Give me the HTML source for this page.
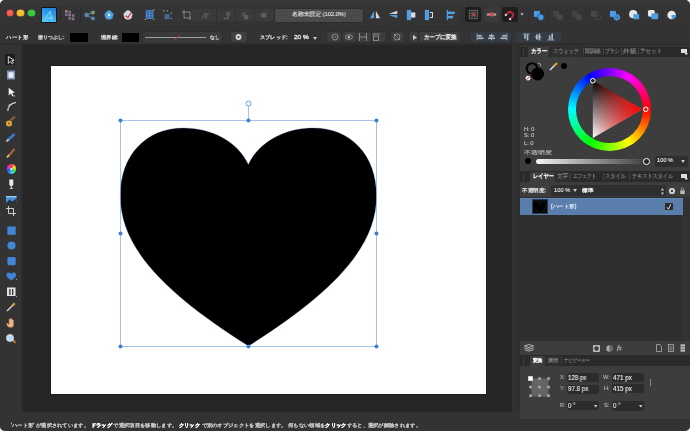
<!DOCTYPE html>
<html><head><meta charset="utf-8">
<style>
*{margin:0;padding:0;box-sizing:border-box}
html,body{width:690px;height:431px;overflow:hidden;background:#fff}
body{font-family:"Liberation Sans",sans-serif;color:#ddd;font-size:7px;line-height:1}
.a{position:absolute}
.t{position:absolute;white-space:nowrap;line-height:1;-webkit-text-stroke:.3px currentColor;will-change:transform}
#win{position:absolute;left:0;top:0;width:690px;height:431px;border-radius:5px;background:#333;overflow:hidden;filter:blur(.3px)}
svg{position:absolute;overflow:visible}
.top svg{transform:scale(.85);filter:blur(.25px)}
.ic svg,.ic div{filter:blur(.2px)}
.btn{position:absolute;background:#3a3a3a;border-radius:2px}
.fld{position:absolute;background:#262626;border-radius:2px}
</style></head><body>
<div id="win">
<div class="a top" style="left:0;top:0;width:690px;height:431px">
  <div class="a" style="left:0;top:0;width:690px;height:28px;background:linear-gradient(#393939 0,#353535 25%,#343434 32%,#343434 78%,#333 80%)"></div>
  <div class="a" style="left:6.7px;top:9.8px;width:6.6px;height:6.6px;border-radius:50%;background:#f25f58;box-shadow:0 0 0 .5px #c44"></div>
  <div class="a" style="left:17.4px;top:9.8px;width:6.6px;height:6.6px;border-radius:50%;background:#f9be2e;box-shadow:0 0 0 .5px #c93"></div>
  <div class="a" style="left:28.2px;top:9.8px;width:6.6px;height:6.6px;border-radius:50%;background:#3ec743;box-shadow:0 0 0 .5px #2a3"></div>
  <div class="a" style="left:40.5px;top:6.5px;width:16px;height:16px;background:#151515;border-radius:1px"></div>
  <div class="a" style="left:41.5px;top:7.5px;width:14px;height:14px;background:linear-gradient(20deg,#55d2fa,#2a9be8 60%,#1c7fd8)"></div>
  <svg style="left:41.5px;top:7.5px" width="14" height="14"><path d="M2,12 L8.5,2.5 L10,12 M4.5,10.5 L12,10.5" stroke="#d8f2ff" stroke-width=".8" fill="none" opacity=".85"/></svg>
  <div class="a" style="left:60px;top:6px;width:1px;height:17px;background:#2a2a2a"></div>
  <svg style="left:64px;top:9px" width="14" height="13">
    <rect x="0" y="0" width="3" height="3" fill="#b0826a"/><rect x="4" y="1" width="3" height="3" fill="#7a7090"/><rect x="0" y="4" width="3" height="3" fill="#6a7aa0"/><rect x="4" y="4.5" width="3" height="3" fill="#a07070"/><rect x="8" y="5" width="3" height="3" fill="#7a78a0"/><rect x="4" y="8.5" width="3" height="3" fill="#807890"/><rect x="8" y="9" width="3" height="3" fill="#9a6a80"/>
  </svg>
  <div class="a" style="left:80px;top:6px;width:1px;height:17px;background:#2b2b2b"></div>
  <svg style="left:83px;top:9px" width="14" height="12">
    <g stroke="#5c7fa0" stroke-width="1.3"><line x1="3" y1="6" x2="10" y2="3"/><line x1="3" y1="6" x2="10" y2="10"/></g>
    <circle cx="3" cy="6" r="2.6" fill="#5a86ad"/><circle cx="10.5" cy="3" r="2.4" fill="#7a9a66"/><circle cx="10.5" cy="10" r="2.2" fill="#5a86ad"/>
  </svg>
  <svg style="left:103px;top:9px" width="12" height="12">
    <path d="M6,0.5 C8,0.5 9,2 9.5,3 C11.5,3.5 11.8,6 10.5,7.5 C11,9.5 9.5,11.5 6,11.5 C2.5,11.5 1,9.5 1.5,7.5 C0.2,6 0.5,3.5 2.5,3 C3,2 4,0.5 6,0.5Z" fill="#4fa2e0"/>
    <path d="M5,4 L8,6 L5,8Z" fill="#fff"/>
  </svg>
  <svg style="left:122px;top:9px" width="12" height="12">
    <path d="M6,0.5 C8,0.5 9,2 9.5,3 C11.5,3.5 11.8,6 10.5,7.5 C11,9.5 9.5,11.5 6,11.5 C2.5,11.5 1,9.5 1.5,7.5 C0.2,6 0.5,3.5 2.5,3 C3,2 4,0.5 6,0.5Z" fill="#d9d9e6"/>
    <path d="M3,7 L6,9 L9.5,3.5" stroke="#d23a3a" stroke-width="1.4" fill="none"/>
  </svg>
  
  <svg style="left:144px;top:9px" width="12" height="12">
    <rect x="1.5" y="1" width="8" height="9" fill="#2f5f9a"/><g stroke="#5aa0ea" stroke-width=".8"><rect x="1.5" y="1" width="8" height="9" fill="none"/><line x1="5.5" y1="1" x2="5.5" y2="10"/><line x1="1.5" y1="4" x2="9.5" y2="4"/><line x1="1.5" y1="7" x2="9.5" y2="7"/></g><g fill="#ddd"><circle cx="0.5" cy="11" r=".7"/><circle cx="10.5" cy="11" r=".7"/><circle cx="10.5" cy="0" r=".7"/></g>
  </svg>
  <svg style="left:162px;top:9px" width="12" height="12">
    <g fill="#4a7fb8"><rect x="2" y="5" width="6" height="6" opacity=".7"/></g>
    <g fill="#8aa"><circle cx="1" cy="1" r=".8"/><circle cx="5" cy="1" r=".8"/><circle cx="10" cy="4" r=".8"/><circle cx="10" cy="10" r=".8"/></g>
  </svg>
  <svg style="left:181px;top:9px" width="12" height="12">
    <g stroke="#bbb" stroke-width=".7" fill="none"><rect x="2.5" y="2.5" width="7" height="7"/><line x1="0" y1="2.5" x2="2.5" y2="2.5"/><line x1="9.5" y1="9.5" x2="12" y2="9.5"/><line x1="2.5" y1="0" x2="2.5" y2="2.5"/><line x1="9.5" y1="9.5" x2="9.5" y2="12"/></g>
  </svg>
  <div class="a" style="left:191.3px;top:8.6px;width:82px;height:12.5px;background:#3a3a3a;border-radius:1.5px"></div>
  <div class="a" style="left:215.5px;top:9px;width:.6px;height:12px;background:#2f2f2f"></div>
  <div class="a" style="left:235px;top:9px;width:.6px;height:12px;background:#2f2f2f"></div>
  <div class="a" style="left:254px;top:9px;width:.6px;height:12px;background:#2f2f2f"></div>
  <svg style="left:201px;top:10.5px" width="10" height="9"><path d="M1,7 L4,2 L6,4 L8,2" stroke="#5e5e5e" stroke-width="1.6" fill="none"/><circle cx="5" cy="6.5" r="1.5" fill="#5a5a5a"/></svg>
  <svg style="left:222px;top:10.5px" width="10" height="9"><rect x="4" y="0" width="5" height="5" fill="#555"/><path d="M1,8 L6,8 L6,5" stroke="#5e5e5e" stroke-width="1.6" fill="none"/></svg>
  <svg style="left:240px;top:10.5px" width="10" height="9"><rect x="1" y="1" width="5" height="5" fill="#505050"/><rect x="4" y="4" width="5" height="5" fill="#5e5e5e"/></svg>
  <svg style="left:259px;top:10.5px" width="10" height="9"><rect x="1" y="1" width="7" height="6" fill="#555"/><rect x="3" y="3" width="3" height="3" fill="#666"/></svg>
  <div class="a" style="left:275px;top:9px;width:88px;height:12.5px;background:#4a4a4a;border-radius:1.5px;box-shadow:0 0 0 .5px #262626"></div>
  <div class="t" style="left:291.7px;top:12.40px;font-size:5.8px;color:#e4e4e4;transform:scaleX(0.974);transform-origin:0 0;--w:53.70;-webkit-text-stroke:.12px currentColor;">名称未設定 (102.0%)</div>
  <svg style="left:368px;top:9px" width="14" height="11"><path d="M1,10 L6,1 L6,10Z" fill="#4ea0e6"/><path d="M8,10 L8,1 L13,10Z" fill="#d8d8d8"/></svg>
  <svg style="left:387px;top:9px" width="12" height="11"><path d="M11,1 L1,5 L11,5Z" fill="#d8d8d8"/><path d="M11,6 L1,6 L11,10Z" fill="#4ea0e6"/></svg>
  <svg style="left:406px;top:9px" width="11" height="12"><rect x="0" y="0" width="5" height="12" fill="#4ea0e6"/><rect x="5" y="3" width="5" height="6" fill="#ddd"/></svg>
  <svg style="left:424px;top:9px" width="11" height="12"><rect x="0" y="0" width="5" height="12" fill="#4ea0e6"/><path d="M6,3 L9,3 L9,9 L6,9" stroke="#ddd" stroke-width="1.2" fill="none"/></svg>
  <svg style="left:446px;top:9px" width="10" height="12"><rect x="0" y="0" width="1.5" height="12" fill="#4ea0e6"/><rect x="1.5" y="2" width="8" height="3" fill="#4ea0e6"/><rect x="1.5" y="7" width="6" height="3" fill="#4ea0e6"/></svg>
  <div class="a" style="left:462px;top:6px;width:1px;height:17px;background:#2b2b2b"></div>
  <div class="a" style="left:465px;top:7px;width:16px;height:15px;background:#1e1e1e;border-radius:2px"></div>
  <svg style="left:468px;top:9px" width="11" height="11"><g stroke="#777" stroke-width=".8" fill="none"><rect x=".5" y=".5" width="10" height="10"/><line x1="3.8" y1="0" x2="3.8" y2="11"/><line x1="7.2" y1="0" x2="7.2" y2="11"/><line x1="0" y1="3.8" x2="11" y2="3.8"/><line x1="0" y1="7.2" x2="11" y2="7.2"/></g><rect x="4" y="4" width="3" height="3" fill="#d04040"/></svg>
  <div class="a" style="left:484px;top:7px;width:15px;height:15px;background:#3a3a3a;border-radius:2px"></div>
  <svg style="left:486px;top:11px" width="11" height="7"><rect x="0" y="2" width="11" height="3" fill="#999"/><circle cx="5.5" cy="3.5" r="2.5" fill="#e04848"/></svg>
  <div class="a" style="left:502px;top:7px;width:16px;height:15px;background:#1e1e1e;border-radius:2px"></div>
  <svg style="left:503.6px;top:8.5px" width="12" height="12"><g transform="rotate(45 6 6)"><path d="M2.5,8.5 L2.5,6 A3.5,3.5 0 0 1 9.5,6 L9.5,8.5" stroke="#b8283a" stroke-width="2.4" fill="none"/><path d="M2.5,8.3 L2.5,10.5 M9.5,8.3 L9.5,10.5" stroke="#eee" stroke-width="2.4"/></g></svg>
  <svg style="left:520px;top:13px" width="5" height="4"><path d="M0,0 L4,0 L2,3Z" fill="#bbb"/></svg>
  <div class="a" style="left:528px;top:9px;width:.6px;height:12px;background:#2f2f2f"></div><div class="a" style="left:547.5px;top:9px;width:.6px;height:12px;background:#2f2f2f"></div><div class="a" style="left:566.5px;top:9px;width:.6px;height:12px;background:#2f2f2f"></div><div class="a" style="left:585.5px;top:9px;width:.6px;height:12px;background:#2f2f2f"></div><div class="a" style="left:604.5px;top:9px;width:.6px;height:12px;background:#2f2f2f"></div><div class="a" style="left:624px;top:9px;width:.6px;height:12px;background:#2f2f2f"></div><div class="a" style="left:643px;top:9px;width:.6px;height:12px;background:#2f2f2f"></div><div class="a" style="left:662px;top:9px;width:.6px;height:12px;background:#2f2f2f"></div><div class="a" style="left:681px;top:9px;width:.6px;height:12px;background:#2f2f2f"></div>
  <svg style="left:533px;top:9.5px" width="13" height="12"><rect x="0" y="0" width="7" height="7" fill="#4a9be6"/><circle cx="8" cy="7.5" r="3.6" fill="#4a9be6" stroke="#1f4f80" stroke-width=".8"/></svg>
  <svg style="left:552px;top:9.5px" width="13" height="12"><rect x="0" y="0" width="7" height="7" fill="#444"/><circle cx="8" cy="7.5" r="3.6" fill="#484848"/></svg>
  <svg style="left:571px;top:9.5px" width="13" height="12"><rect x="0" y="0" width="7" height="7" fill="#424242"/><circle cx="8" cy="7.5" r="3.6" fill="#474747"/></svg>
  <svg style="left:590px;top:9.5px" width="13" height="12"><rect x="0" y="0" width="7" height="7" fill="#484848"/><circle cx="8" cy="7.5" r="3.2" fill="none" stroke="#4a4a4a" stroke-width="1.1"/></svg>
  <svg style="left:609px;top:9.5px" width="13" height="12"><rect x="0" y="0" width="7" height="7" fill="#4a9be6"/><circle cx="8" cy="7.5" r="3.3" fill="#3a80c8" stroke="#5aaaf0" stroke-width="1"/></svg>
  <svg style="left:628px;top:9px" width="13" height="12"><circle cx="5" cy="5" r="4.8" fill="#e8e8e8"/><rect x="5" y="5" width="7" height="6" fill="#4ea0e6"/></svg>
  <svg style="left:647px;top:9px" width="13" height="12"><rect x="0" y="0" width="8" height="8" rx="2" fill="#e8e8e8"/><rect x="4" y="4" width="8" height="7" rx="1.5" fill="#4ea0e6"/></svg>
  <svg style="left:666px;top:9px" width="13" height="12"><circle cx="5.5" cy="6" r="5" fill="#e8e8e8"/><path d="M5.5,6 L10.5,6 A5,5 0 0 1 5.5,11Z" fill="#4ea0e6"/></svg>

</div>
  <div class="a" style="left:0;top:28px;width:690px;height:17px;background:linear-gradient(#333 0,#333 85%,#2a2a2a 100%)"></div>
  <div class="t" style="left:6.0px;top:35.10px;font-size:5.4px;color:#ddd;transform:scaleX(1.100);transform-origin:0 0;--w:22.00;">ハート形</div>
  <div class="t" style="left:38.4px;top:35.10px;font-size:5.4px;color:#ddd;transform:scaleX(0.985);transform-origin:0 0;--w:26.10;">塗りつぶし:</div>
  <div class="a" style="left:70.3px;top:33px;width:17.5px;height:9px;background:#000"></div>
  <div class="t" style="left:100.8px;top:35.10px;font-size:5.4px;color:#ddd;transform:scaleX(1.055);transform-origin:0 0;--w:17.40;">境界線:</div>
  <div class="a" style="left:121.8px;top:32.5px;width:17.5px;height:9.3px;background:#000"></div>
  <div class="fld" style="left:143px;top:32px;width:79px;height:10.5px;background:#3a3a3a;box-shadow:0 0 0 .5px #2a2a2a"></div>
  <div class="a" style="left:145px;top:37px;width:61px;height:.8px;background:#a0a0a0"></div>
  <svg style="left:174px;top:34px" width="6" height="7"><line x1="1" y1="6" x2="5" y2="1" stroke="#c43030" stroke-width="1"/></svg>
  <div class="t" style="left:209.5px;top:34.80px;font-size:5.4px;color:#ddd;transform:scaleX(0.950);transform-origin:0 0;--w:9.50;">なし</div>
  <div class="btn" style="left:231.2px;top:31.8px;width:16px;height:10.2px;background:#404040;box-shadow:0 0 0 .5px #2a2a2a"></div>
  <svg style="left:235.2px;top:33px" width="8" height="8"><circle cx="3.5" cy="4" r="2.9" fill="#d8d8d8"/><circle cx="3.5" cy="4" r="1.1" fill="#3e3e3e"/></svg>
  <div class="t" style="left:260.2px;top:35.10px;font-size:5.4px;color:#ddd;transform:scaleX(1.042);transform-origin:0 0;--w:27.60;">スプレッド:</div>
  <div class="fld" style="left:291.5px;top:32px;width:29px;height:10px;background:#313131"></div>
  <div class="t" style="left:294.4px;top:34.90px;font-size:5.8px;color:#eee;transform:scaleX(1.104);transform-origin:0 0;--w:14.60;">20 %</div>
  <svg style="left:313.4px;top:36.5px" width="5" height="4"><path d="M0,0 L4,0 L2,3Z" fill="#ccc"/></svg>
  <div class="btn" style="left:327px;top:32px;width:14px;height:10px;background:#3d3d3d;box-shadow:0 0 0 .5px #2b2b2b"></div>
  <div class="btn" style="left:342.5px;top:32px;width:14px;height:10px;background:#3d3d3d;box-shadow:0 0 0 .5px #2b2b2b"></div>
  <div class="btn" style="left:357px;top:32px;width:14px;height:10px;background:#3d3d3d;box-shadow:0 0 0 .5px #2b2b2b"></div>
  <div class="btn" style="left:371.5px;top:32px;width:14px;height:10px;background:#3d3d3d;box-shadow:0 0 0 .5px #2b2b2b"></div>
  <svg style="left:330.6px;top:33px" width="8" height="8"><circle cx="4" cy="4" r="3" fill="none" stroke="#aaa" stroke-width=".7"/><line x1="2.5" y1="4" x2="5.5" y2="4" stroke="#aaa" stroke-width=".7"/></svg>
  <svg style="left:344.8px;top:33px" width="8" height="8"><ellipse cx="4" cy="4" rx="3.5" ry="2.3" fill="none" stroke="#aaa" stroke-width=".7"/><circle cx="4" cy="4" r="1.2" fill="#bbb"/></svg>
  <svg style="left:359.3px;top:33px" width="8" height="8"><g stroke="#aaa" stroke-width=".7" fill="none"><line x1=".5" y1="0" x2=".5" y2="8"/><line x1="7.5" y1="0" x2="7.5" y2="8"/><line x1="0" y1="4" x2="8" y2="4"/></g></svg>
  <svg style="left:372.3px;top:33px" width="8" height="8"><g stroke="#aaa" stroke-width=".7" fill="none"><rect x="1.5" y="3" width="5" height="4.5"/><line x1="0" y1="1" x2="8" y2="1"/></g></svg>
  <div class="btn" style="left:391px;top:32px;width:13px;height:10px;background:#3d3d3d;box-shadow:0 0 0 .5px #2b2b2b"></div>
  <svg style="left:393.1px;top:33px" width="8" height="8"><g stroke="#aaa" stroke-width=".7" fill="none"><circle cx="4" cy="4" r="3"/><line x1="1" y1="1" x2="7" y2="7"/></g></svg>
  <div class="btn" style="left:409px;top:32px;width:51.4px;height:10px;background:#3d3d3d;box-shadow:0 0 0 .5px #2b2b2b"></div>
  <svg style="left:412.8px;top:34.5px" width="5" height="6"><path d="M0,0 L4,2.5 L0,5Z" fill="#ccc"/></svg>
  <div class="a" style="left:418.4px;top:32px;width:.7px;height:10px;background:#262626"></div>
  <div class="t" style="left:423.5px;top:35.00px;font-size:5.6px;color:#eee;transform:scaleX(0.903);transform-origin:0 0;--w:32.50;">カーブに変換</div>
  <div class="btn" style="left:470.8px;top:32px;width:40.6px;height:10px;background:#353b43"></div>
  <svg style="left:474px;top:33px;transform:scale(.85);transform-origin:50% 50%" width="36" height="8"><g fill="#a8b8ca"><rect x="0" y="0" width="1" height="8"/><rect x="1" y="1.5" width="5" height="2"/><rect x="1" y="4.5" width="7" height="2"/>
    <rect x="17" y="0" width="1" height="8"/><rect x="14.5" y="1.5" width="6" height="2"/><rect x="13.5" y="4.5" width="8" height="2"/>
    <rect x="35" y="0" width="1" height="8"/><rect x="30" y="1.5" width="5" height="2"/><rect x="28" y="4.5" width="7" height="2"/></g></svg>
  <div class="btn" style="left:516.4px;top:32px;width:44.3px;height:10px;background:#353b43"></div>
  <svg style="left:520px;top:33px;transform:scale(.85);transform-origin:50% 50%" width="38" height="8"><g fill="#a8b8ca"><rect x="0" y="0" width="8" height="1"/><rect x="1.5" y="1" width="2" height="5"/><rect x="4.5" y="1" width="2" height="7"/>
    <rect x="14" y="3.5" width="8" height="1"/><rect x="15.5" y="1" width="2" height="6"/><rect x="18.5" y="0" width="2" height="8"/>
    <rect x="29" y="7" width="8" height="1"/><rect x="30.5" y="2" width="2" height="5"/><rect x="33.5" y="0" width="2" height="7"/></g></svg>

  <div class="a" style="left:0;top:45px;width:23px;height:367px;background:#333"></div><div class="a" style="left:21px;top:45px;width:1.5px;height:367px;background:#2c2c2c"></div>
  <div class="a" style="left:4.6px;top:54px;width:10.5px;height:11px;background:#1b1b1b;border-radius:1px"></div>
  <svg style="left:0;top:0" width="22" height="431">
    <!-- move -->
    <path d="M8.3,56.5 L8.3,63.5 L10.2,61.5 L12.3,64 L13.5,63 L11.6,60.7 L14.2,60.2Z" fill="none" stroke="#e6e6e6" stroke-width=".9"/>
    <!-- artboard -->
    <rect x="7" y="70.5" width="8" height="9" fill="#7d95b0"/><rect x="8.5" y="72.3" width="5" height="5.5" fill="#e8eef5"/>
    <!-- node -->
    <path d="M8.7,87.7 L8.7,95.5 L10.8,93.5 L12.6,96.5 L13.8,95.8 L12,92.9 L14.8,92.6Z" fill="#f2f2f2"/>
    <circle cx="14.5" cy="96" r="1" fill="#777"/>
    <!-- pen -->
    <path d="M8,110.5 C8,106 10,103.5 16,102.5" stroke="#e8e8e8" stroke-width="1.2" fill="none"/>
    <path d="M7.2,111 L9.5,104" stroke="#8ab" stroke-width="1" fill="none"/>
    <!-- pencil -->
    <path d="M10.5,120.5 L15,116.5" stroke="#7a5a40" stroke-width="2.4"/>
    <circle cx="9" cy="123.5" r="3" fill="#e5a73a"/><circle cx="9" cy="123.5" r="1" fill="#805a20"/>
    <!-- vector brush -->
    <path d="M7.5,140.5 L14.5,134" stroke="#3a78c0" stroke-width="3"/>
    <path d="M6.5,141.5 L8.5,139.5" stroke="#dde" stroke-width="1.5"/>
    <!-- paint brush -->
    <path d="M8,156.5 L14.5,149" stroke="#b0603a" stroke-width="2.2"/>
    <path d="M7,157.5 L9,155" stroke="#eec070" stroke-width="1.6"/>
    <!-- color -->
    <circle cx="11.3" cy="169" r="4.6" fill="url(#cw)"/>
    <!-- transparency -->
    <path d="M9.3,179.5 L13.3,179.5 L13.3,185 L11.8,186 L11.8,188 L13.3,189 L9.3,189 L10.8,188 L10.8,186 L9.3,185Z" fill="#e9e9e9"/>
    <!-- place image -->
    <rect x="6" y="196" width="10.5" height="7" fill="#4b8fd8"/><path d="M6,203 L9.5,199.5 L12,201.5 L16.5,198.5 L16.5,203Z" fill="#234"/><rect x="6" y="196" width="10.5" height="1.3" fill="#9cc8f0"/>
    <!-- crop -->
    <g stroke="#ddd" stroke-width=".9" fill="none"><path d="M8.5,206 L8.5,213.5 L16,213.5"/><path d="M6,208.5 L13.5,208.5 L13.5,216"/></g>
    <!-- rect -->
    <rect x="7.4" y="226.5" width="8.3" height="8.3" fill="#4186d6"/>
    <circle cx="11.5" cy="245.5" r="4.1" fill="#4186d6"/>
    <rect x="7.4" y="257" width="8.3" height="8.3" rx="1.5" fill="#4186d6"/>
    <path d="M11.3,274.2 C10.5,272.8 9.5,272.6 8.7,272.6 C7.3,272.6 6.5,273.7 6.5,275 C6.5,277 8.5,278.5 11.3,280.3 C14,278.5 16,277 16,275 C16,273.7 15.2,272.6 13.8,272.6 C13,272.6 12,272.8 11.3,274.2Z" fill="#4186d6"/>
    <circle cx="16.5" cy="279.5" r=".7" fill="#999"/>
    <!-- text frame -->
    <rect x="7" y="287.5" width="8.5" height="8.5" fill="#e5e5e5"/><rect x="9.2" y="289" width="1.3" height="6" fill="#333"/><rect x="12" y="289" width="1.3" height="6" fill="#333"/>
    <circle cx="16.5" cy="296.5" r=".7" fill="#999"/>
    <!-- eyedropper -->
    <path d="M7,311 L12.5,305.5" stroke="#ddd" stroke-width="1.2"/><path d="M12,306 L14.7,303.3" stroke="#d9a040" stroke-width="2.2"/>
    <!-- hand -->
    <path d="M8,327 C6.5,325 6,323.5 6.8,323 C7.5,322.6 8.3,323.6 8.8,324.3 L8.8,319.3 C8.8,318.5 10,318.5 10,319.3 L10,318.5 C10,317.7 11.3,317.7 11.3,318.5 L11.3,319 C11.3,318.3 12.6,318.3 12.6,319 L12.6,320 C12.6,319.3 13.8,319.3 13.8,320 L13.8,324.5 C13.8,326.5 12.5,327.8 11,327.8Z" fill="#f0b48a" stroke="#5a3a2a" stroke-width=".5"/>
    <!-- zoom -->
    <path d="M12.8,339.8 L15.5,342.8" stroke="#d07a30" stroke-width="1.8"/>
    <circle cx="10" cy="338" r="3.6" fill="#b8dcf8" stroke="#eee" stroke-width=".6"/>
    <defs><linearGradient id="cwl" x1="0" y1="0" x2="1" y2="1"><stop offset="0" stop-color="#f3a"/><stop offset="1" stop-color="#3d5"/></linearGradient></defs>
  </svg>
  <div class="a" style="left:6.7px;top:164.4px;width:9.2px;height:9.2px;border-radius:50%;background:conic-gradient(#f33,#fd3,#3d4,#3ce,#35f,#c3e,#f33)"></div>
  <div class="a" style="left:10.2px;top:167.9px;width:2.2px;height:2.2px;border-radius:50%;background:#eee"></div>

  <div class="a" style="left:22.8px;top:45px;width:489.7px;height:367px;background:#262626"></div>
  <div class="a" style="left:50.5px;top:65.9px;width:435.9px;height:328.5px;background:#fff;box-shadow:0 0 0 .7px #1c1c1c"></div>
  <svg style="left:0;top:0" width="690" height="431">
    <path d="M248.4,164.5 C238,142 212,128 183.5,128 C146,128 120.3,155 120.3,196 C120.3,251 171,297 248.4,346 C325.8,297 376.5,251 376.5,196 C376.5,155 350.8,128 313.3,128 C284.8,128 258.8,142 248.4,164.5 Z" fill="#000" stroke="#3d6aa8" stroke-width=".5" stroke-opacity=".6"/>
    <g stroke="#7fa9e0" stroke-width="0.7" fill="none">
      <rect x="120.5" y="120.5" width="256" height="226"/>
      <line x1="248.5" y1="106" x2="248.5" y2="120"/>
    </g>
    <g fill="#3f7fcf">
      <circle cx="120.5" cy="120.5" r="2"/><circle cx="248.5" cy="120.5" r="2"/><circle cx="376.5" cy="120.5" r="2"/>
      <circle cx="120.5" cy="233.5" r="2"/><circle cx="376.5" cy="233.5" r="2"/>
      <circle cx="120.5" cy="346.5" r="2"/><circle cx="248.5" cy="346.5" r="2"/><circle cx="376.5" cy="346.5" r="2"/>
    </g>
    <circle cx="248.5" cy="103.5" r="2.5" fill="#fff" stroke="#6d9bd6" stroke-width="1"/>
  </svg>

  <div class="a" style="left:512.5px;top:45px;width:7.5px;height:375px;background:#2f2f2f"></div>
  <!-- color panel tabs -->
  <div class="a" style="left:520px;top:47.3px;width:172px;height:9.5px;background:#2a2a2a"></div>
  <div class="a" style="left:523px;top:47.5px;width:.7px;height:8px;background:#3d3d3d"></div>
  <div class="a" style="left:527.8px;top:47.3px;width:21.5px;height:9.5px;background:#3d3d3d"></div>
  <div class="a" style="left:550.6px;top:47.3px;width:31.3px;height:9.5px;background:#2f2f2f"></div>
  <div class="t" style="left:531.0px;top:48.85px;font-size:5.5px;color:#fff;transform:scaleX(0.906);transform-origin:0 0;--w:16.30;-webkit-text-stroke:.35px currentColor;">カラー</div>
  <div class="t" style="left:553.2px;top:48.85px;font-size:5.5px;color:#8a8a8a;transform:scaleX(0.870);transform-origin:0 0;--w:26.10;-webkit-text-stroke:.12px currentColor;">スウォッチ</div>
  <div class="a" style="left:582.7px;top:48px;width:.6px;height:7px;background:#444"></div>
  <div class="t" style="left:584.5px;top:48.85px;font-size:5.5px;color:#8a8a8a;transform:scaleX(0.861);transform-origin:0 0;--w:15.50;-webkit-text-stroke:.12px currentColor;">階調線</div>
  <div class="a" style="left:602.5px;top:48px;width:.6px;height:7px;background:#444"></div>
  <div class="t" style="left:604.6px;top:48.85px;font-size:5.5px;color:#8a8a8a;transform:scaleX(0.794);transform-origin:0 0;--w:14.30;-webkit-text-stroke:.12px currentColor;">ブラシ</div>
  <div class="a" style="left:620.7px;top:48px;width:.6px;height:7px;background:#444"></div>
  <div class="t" style="left:622.8px;top:48.85px;font-size:5.5px;color:#8a8a8a;transform:scaleX(1.092);transform-origin:0 0;--w:13.10;-webkit-text-stroke:.12px currentColor;">外観</div>
  <div class="a" style="left:638.3px;top:48px;width:.6px;height:7px;background:#444"></div>
  <div class="t" style="left:640.4px;top:48.85px;font-size:5.5px;color:#8a8a8a;transform:scaleX(0.925);transform-origin:0 0;--w:22.20;-webkit-text-stroke:.12px currentColor;">アセット</div>
  <svg style="left:681px;top:49px" width="7" height="6"><rect x="0" y="0" width="6" height="4" fill="#ddd"/><rect x="4" y="4" width="2.5" height="1.5" fill="#ddd"/></svg>
  <div class="a" style="left:520px;top:56.8px;width:172px;height:114.4px;background:#3d3d3d"></div>
  <svg style="left:524px;top:60px" width="24" height="24">
    <circle cx="8" cy="8.5" r="5.3" fill="none" stroke="#000" stroke-width="2"/>
    <path d="M14,3 A3,3 0 0 1 17,6" stroke="#bbb" stroke-width=".8" fill="none"/>
    <circle cx="13.7" cy="14" r="6.4" fill="#000"/>
    <circle cx="4" cy="18.2" r="2.4" fill="#eee"/><line x1="2.5" y1="19.8" x2="5.5" y2="16.6" stroke="#d33" stroke-width="1"/>
  </svg>
  <svg style="left:549px;top:60px" width="20" height="12">
    <path d="M1,10 L6,5" stroke="#ddd" stroke-width="1.6"/><path d="M5,6 L8,3" stroke="#e0a030" stroke-width="2.2"/>
    <circle cx="15" cy="6" r="3" fill="#000"/>
  </svg>
  <div class="a" style="left:568px;top:68px;width:82.5px;height:82.5px;border-radius:50%;background:conic-gradient(from 90deg,#f00,#ff0,#0f0,#0ff,#00f,#f0f,#f00)"></div>
  <div class="a" style="left:576px;top:76px;width:66.5px;height:66.5px;border-radius:50%;background:#3d3d3d"></div>
  <svg style="left:0;top:0" width="690" height="431">
    <defs>
      <linearGradient id="tg1" x1="0" y1="0" x2="0" y2="1"><stop offset="0" stop-color="#000"/><stop offset="1" stop-color="#fff"/></linearGradient>
      <linearGradient id="tg2" x1="592.8" y1="109.3" x2="642.3" y2="109.3" gradientUnits="userSpaceOnUse"><stop offset="0" stop-color="#f00" stop-opacity="0"/><stop offset="1" stop-color="#f00" stop-opacity="1"/></linearGradient>
    </defs>
    <path d="M592.8,80.7 L642.3,109.3 L592.8,137.9Z" fill="url(#tg1)"/>
    <path d="M592.8,80.7 L642.3,109.3 L592.8,137.9Z" fill="url(#tg2)"/>
    <circle cx="592.8" cy="80.7" r="2.3" fill="#222" stroke="#fff" stroke-width="1"/>
    <circle cx="645.8" cy="109.3" r="2.3" fill="#d22" stroke="#fff" stroke-width="1"/>
  </svg>
  <div class="t" style="left:524.0px;top:126.75px;font-size:5.7px;color:#ccc;-webkit-text-stroke:.1px currentColor;">H: 0</div>
  <div class="t" style="left:524.0px;top:133.45px;font-size:5.7px;color:#ccc;-webkit-text-stroke:.1px currentColor;">S: 0</div>
  <div class="t" style="left:524.0px;top:140.65px;font-size:5.7px;color:#ccc;-webkit-text-stroke:.1px currentColor;">L: 0</div>
  <div class="t" style="left:524.0px;top:149.50px;font-size:5.4px;color:#b0b0b0;transform:scaleX(1.400);transform-origin:0 0;--w:28.00;-webkit-text-stroke:.15px currentColor;">不透明度</div>
  <div class="a" style="left:525px;top:158px;width:6px;height:6px;border-radius:50%;background:#000"></div>
  <div class="a" style="left:535.5px;top:158.7px;width:113px;height:5px;border-radius:2.5px;background:linear-gradient(90deg,rgba(255,255,255,.9),rgba(0,0,0,.6)),repeating-conic-gradient(#bbb 0 25%,#777 0 50%) 0 0/2.5px 2.5px"></div>
  <div class="a" style="left:642.8px;top:157.6px;width:7px;height:7px;border-radius:50%;background:#222;border:1px solid #fff"></div>
  <div class="fld" style="left:655px;top:155.5px;width:33px;height:11px;background:#2e2e2e"></div>
  <div class="t" style="left:657.0px;top:158.10px;font-size:5.8px;color:#eee;transform:scaleX(0.973);transform-origin:0 0;--w:16.00;-webkit-text-stroke:.1px currentColor;">100 %</div>
  <svg style="left:681px;top:160px" width="5" height="4"><path d="M0,0 L4,0 L2,3Z" fill="#ccc"/></svg>

  <!-- layers -->
  <div class="a" style="left:520px;top:171.2px;width:172px;height:11px;background:#2a2a2a"></div>
  <div class="a" style="left:523px;top:172.5px;width:.7px;height:8px;background:#3d3d3d"></div>
  <div class="a" style="left:530.4px;top:172px;width:24.8px;height:10.3px;background:#3d3d3d"></div>
  <div class="t" style="left:533.0px;top:174.25px;font-size:5.5px;color:#fff;transform:scaleX(0.871);transform-origin:0 0;--w:20.90;-webkit-text-stroke:.35px currentColor;">レイヤー</div>
  <div class="a" style="left:555.5px;top:172px;width:14px;height:10.3px;background:#2f2f2f"></div>
  <div class="t" style="left:557.0px;top:174.25px;font-size:5.5px;color:#8a8a8a;transform:scaleX(0.917);transform-origin:0 0;--w:11.00;-webkit-text-stroke:.12px currentColor;">文字</div>
  <div class="a" style="left:570px;top:173px;width:.6px;height:7px;background:#444"></div>
  <div class="t" style="left:572.8px;top:174.25px;font-size:5.5px;color:#8a8a8a;transform:scaleX(0.773);transform-origin:0 0;--w:23.20;-webkit-text-stroke:.12px currentColor;">エフェクト</div>
  <div class="a" style="left:602.5px;top:173px;width:.6px;height:7px;background:#444"></div>
  <div class="t" style="left:605.2px;top:174.25px;font-size:5.5px;color:#8a8a8a;transform:scaleX(0.867);transform-origin:0 0;--w:20.80;-webkit-text-stroke:.12px currentColor;">スタイル</div>
  <div class="a" style="left:629.3px;top:173px;width:.6px;height:7px;background:#444"></div>
  <div class="t" style="left:632.0px;top:174.25px;font-size:5.5px;color:#8a8a8a;transform:scaleX(0.854);transform-origin:0 0;--w:41.00;-webkit-text-stroke:.12px currentColor;">テキストスタイル</div>
  <svg style="left:681px;top:174px" width="7" height="6"><rect x="0" y="0" width="6" height="4" fill="#ddd"/><rect x="4" y="4" width="2.5" height="1.5" fill="#ddd"/></svg>
  <div class="a" style="left:520px;top:182.3px;width:172px;height:15px;background:#3d3d3d"></div>
  <div class="t" style="left:522.0px;top:188.10px;font-size:5.4px;color:#ddd;transform:scaleX(1.116);transform-origin:0 0;--w:24.00;">不透明度:</div>
  <div class="fld" style="left:550.6px;top:185px;width:115px;height:11px;background:#2e2e2e"></div>
  <div class="t" style="left:553.9px;top:187.90px;font-size:5.8px;color:#eee;transform:scaleX(0.979);transform-origin:0 0;--w:16.10;-webkit-text-stroke:.1px currentColor;">100 %</div>
  <svg style="left:572.7px;top:189.3px" width="5" height="4"><path d="M0,0 L4,0 L2,3Z" fill="#ccc"/></svg>
  <div class="t" style="left:582.0px;top:188.10px;font-size:5.4px;color:#eee;transform:scaleX(1.100);transform-origin:0 0;--w:11.00;">標準</div>
  <svg style="left:660.5px;top:187.5px" width="3" height="7"><path d="M0,2.5 L1.5,0 L3,2.5Z M0,4.5 L1.5,7 L3,4.5Z" fill="#ccc"/></svg>
  <svg style="left:667.8px;top:186.8px" width="8" height="8"><circle cx="4" cy="4" r="3.1" fill="#d8d8d8"/><circle cx="4" cy="4" r="1.2" fill="#3d3d3d"/></svg>
  <svg style="left:679.5px;top:186.5px" width="6" height="8"><path d="M1.3,3.3 L1.3,2 A1.2,1.2 0 0 1 3.7,2 L3.7,3.3" stroke="#aaa" fill="none" stroke-width=".7"/><rect x="0.3" y="3.3" width="4.4" height="3.8" fill="#bbb"/></svg>
  <div class="a" style="left:520px;top:197.3px;width:172px;height:143.7px;background:#2e2e2e"></div>
  <div class="a" style="left:682px;top:197.3px;width:8px;height:143.7px;background:#323232"></div>
  <div class="a" style="left:520px;top:198px;width:162.5px;height:17.4px;background:#5a7eac;box-shadow:inset 0 .6px 0 #6a8cba"></div>
  <div class="a" style="left:531.5px;top:199px;width:16.5px;height:15px;background:#0a0a0a;border:0.5px solid #2a3a50"></div>
  <svg style="left:532px;top:201px" width="15" height="12"><path d="M7.5,3 C6.5,1 5,0.5 4,0.5 C2,0.5 0.8,2 0.8,4 C0.8,6.5 3.5,9 7.5,11.5 C11.5,9 14.2,6.5 14.2,4 C14.2,2 13,0.5 11,0.5 C10,0.5 8.5,1 7.5,3Z" fill="#000" stroke="#223" stroke-width=".5"/></svg>
  <div class="t" style="left:550.5px;top:203.80px;font-size:5.4px;color:#d0def0;transform:scaleX(1.109);transform-origin:0 0;--w:25.50;">[ハート形]</div>
  <div class="a" style="left:665px;top:202.5px;width:7.5px;height:7.5px;background:#262a30;border-radius:1px;box-shadow:0 0 0 .5px #6a7a90"></div>
  <svg style="left:665.2px;top:202.5px" width="8" height="8"><path d="M2,4.3 L3.4,6.2 L5.8,1.3" stroke="#f4f4f4" stroke-width=".9" fill="none"/></svg>
  <!-- layers bottom bar -->
  <div class="a" style="left:520px;top:341px;width:172px;height:13.8px;background:#3d3d3d"></div>
  <svg style="left:523.6px;top:343.5px" width="10" height="8"><g fill="none" stroke="#ccc" stroke-width=".8"><path d="M0.5,2 L5,0.5 L9.5,2 L5,3.5Z"/><path d="M0.5,3.8 L5,5.3 L9.5,3.8"/><path d="M0.5,5.6 L5,7.1 L9.5,5.6"/></g></svg>
  <svg style="left:592.5px;top:344.5px" width="7" height="7"><rect x="0" y="0" width="7" height="7" rx="1" fill="#bbb"/><circle cx="3.5" cy="3.5" r="2.2" fill="#3d3d3d"/></svg>
  <svg style="left:606px;top:344.5px" width="7" height="7"><circle cx="3.5" cy="3.5" r="3.2" fill="#aaa"/><path d="M3.5,0.3 A3.2,3.2 0 0 1 3.5,6.7Z" fill="#666"/></svg>
  <div class="t" style="left:617.0px;top:344.75px;font-size:6.5px;color:#aaa;font-family:'Liberation Serif',serif;font-style:italic;">fx</div>
  <svg style="left:655.5px;top:344.3px" width="6" height="8"><path d="M0.5,0.5 L3.8,0.5 L5.5,2.2 L5.5,7.5 L0.5,7.5Z" fill="none" stroke="#bbb" stroke-width=".7"/></svg>
  <svg style="left:668px;top:344.3px" width="6" height="8"><rect x=".5" y=".5" width="5" height="7" fill="none" stroke="#bbb" stroke-width=".7"/><g stroke="#bbb" stroke-width=".6"><line x1="1.5" y1="2.7" x2="4.5" y2="2.7"/><line x1="1.5" y1="4.3" x2="4.5" y2="4.3"/><line x1="1.5" y1="5.9" x2="4.5" y2="5.9"/></g></svg>
  <svg style="left:680px;top:344.3px" width="6" height="8"><rect x=".5" y=".3" width="4.5" height="7.4" fill="#bbb"/><g stroke="#3d3d3d" stroke-width=".6"><line x1=".5" y1="2.7" x2="5" y2="2.7"/><line x1=".5" y1="5.2" x2="5" y2="5.2"/></g></svg>
  <!-- transform -->
  <div class="a" style="left:520px;top:354.8px;width:172px;height:11.4px;background:#2a2a2a"></div>
  <div class="a" style="left:523px;top:356px;width:.7px;height:9px;background:#3d3d3d"></div>
  <div class="a" style="left:530px;top:355.5px;width:15px;height:10.7px;background:#3d3d3d"></div>
  <div class="t" style="left:532.8px;top:358.10px;font-size:5.2px;color:#fff;transform:scaleX(0.920);transform-origin:0 0;--w:9.20;-webkit-text-stroke:.35px currentColor;">変換</div>
  <div class="a" style="left:545.8px;top:355.5px;width:14px;height:10.7px;background:#2f2f2f"></div>
  <div class="t" style="left:547.7px;top:358.10px;font-size:5.2px;color:#8a8a8a;transform:scaleX(1.030);transform-origin:0 0;--w:10.30;-webkit-text-stroke:.12px currentColor;">履歴</div>
  <div class="a" style="left:561px;top:357px;width:.6px;height:7px;background:#444"></div>
  <div class="t" style="left:563.5px;top:358.10px;font-size:5.2px;color:#8a8a8a;transform:scaleX(0.863);transform-origin:0 0;--w:25.90;-webkit-text-stroke:.12px currentColor;">ナビゲーター</div>
  <div class="a" style="left:520px;top:366.2px;width:172px;height:53.2px;background:#3d3d3d"></div>
  <svg style="left:527px;top:375px" width="25" height="25">
    <rect x="4.5" y="3.5" width="17" height="18" fill="#646464"/>
    <g fill="#b0b0b0"><rect x="11.3" y="2.3" width="2.5" height="2.5"/><rect x="20.3" y="2.3" width="2.5" height="2.5"/>
    <rect x="2.3" y="10.8" width="2.5" height="2.5"/><rect x="11.3" y="10.8" width="2.5" height="2.5"/><rect x="20.3" y="10.8" width="2.5" height="2.5"/>
    <rect x="2.3" y="19.5" width="2.5" height="2.5"/><rect x="11.3" y="19.5" width="2.5" height="2.5"/><rect x="20.3" y="19.5" width="2.5" height="2.5"/></g>
    <rect x="1.2" y="1.2" width="4.6" height="4.6" fill="#fff"/>
  </svg>
  <div class="t" style="left:559.7px;top:375.20px;font-size:5.6px;color:#bbb;transform:scaleX(0.887);transform-origin:0 0;--w:4.70;-webkit-text-stroke:.1px currentColor;">X:</div>
  <div class="fld" style="left:567.2px;top:373.4px;width:31.5px;height:8.6px;background:#2c2c2c"></div>
  <div class="t" style="left:568.2px;top:374.65px;font-size:6.3px;color:#eee;transform:scaleX(0.973);transform-origin:0 0;--w:18.40;-webkit-text-stroke:.1px currentColor;">128 px</div>
  <div class="t" style="left:559.7px;top:386.40px;font-size:5.6px;color:#bbb;transform:scaleX(0.943);transform-origin:0 0;--w:4.70;-webkit-text-stroke:.1px currentColor;">Y:</div>
  <div class="fld" style="left:567.2px;top:384.5px;width:31.5px;height:9.3px;background:#2c2c2c"></div>
  <div class="t" style="left:568.2px;top:386.05px;font-size:6.3px;color:#eee;transform:scaleX(0.983);transform-origin:0 0;--w:20.30;-webkit-text-stroke:.1px currentColor;">97.8 px</div>
  <div class="t" style="left:603.0px;top:375.20px;font-size:5.6px;color:#bbb;transform:scaleX(0.965);transform-origin:0 0;--w:6.50;-webkit-text-stroke:.1px currentColor;">W:</div>
  <div class="fld" style="left:611.6px;top:372.8px;width:32.8px;height:8.8px;background:#2c2c2c"></div>
  <div class="t" style="left:612.7px;top:374.65px;font-size:6.3px;color:#eee;transform:scaleX(1.005);transform-origin:0 0;--w:19.00;-webkit-text-stroke:.1px currentColor;">471 px</div>
  <div class="t" style="left:604.0px;top:386.40px;font-size:5.6px;color:#bbb;transform:scaleX(0.983);transform-origin:0 0;--w:5.50;-webkit-text-stroke:.1px currentColor;">H:</div>
  <div class="fld" style="left:611.6px;top:383.6px;width:32.8px;height:9.3px;background:#2c2c2c"></div>
  <div class="t" style="left:612.7px;top:386.05px;font-size:6.3px;color:#eee;transform:scaleX(1.005);transform-origin:0 0;--w:19.00;-webkit-text-stroke:.1px currentColor;">415 px</div>
  <div class="a" style="left:649.5px;top:379px;width:1.6px;height:6.5px;background:#888"></div>
  <div class="t" style="left:560.0px;top:403.10px;font-size:5.6px;color:#bbb;transform:scaleX(0.894);transform-origin:0 0;--w:5.00;-webkit-text-stroke:.1px currentColor;">R:</div>
  <div class="fld" style="left:567.2px;top:401.2px;width:31.5px;height:9.3px;background:#2c2c2c"></div>
  <div class="t" style="left:568.2px;top:402.75px;font-size:6.3px;color:#eee;transform:scaleX(0.938);transform-origin:0 0;--w:7.30;-webkit-text-stroke:.1px currentColor;">0 °</div>
  <svg style="left:593.5px;top:405px" width="4" height="3"><path d="M0,0 L3.5,0 L1.75,2.5Z" fill="#ccc"/></svg>
  <div class="t" style="left:604.0px;top:403.10px;font-size:5.6px;color:#bbb;transform:scaleX(1.038);transform-origin:0 0;--w:5.50;-webkit-text-stroke:.1px currentColor;">S:</div>
  <div class="fld" style="left:611.6px;top:401.3px;width:32.8px;height:9.5px;background:#2c2c2c"></div>
  <div class="t" style="left:612.7px;top:402.75px;font-size:6.3px;color:#eee;transform:scaleX(0.938);transform-origin:0 0;--w:7.30;-webkit-text-stroke:.1px currentColor;">0 °</div>
  <svg style="left:638.5px;top:405px" width="4" height="3"><path d="M0,0 L3.5,0 L1.75,2.5Z" fill="#ccc"/></svg>

  <div class="a" style="left:0;top:412px;width:690px;height:19px;background:#333"></div>
  <div class="a" style="left:520px;top:412px;width:172px;height:7.4px;background:#3d3d3d"></div>
  <div class="t" style="left:10.5px;top:423.20px;font-size:5.2px;color:#cfcfcf;transform:scaleX(1.063);transform-origin:0 0;--w:410.00;">'ハート形' が選択されています。 <b style="color:#fff">ドラッグ</b> で選択項目を移動します。 <b style="color:#fff">クリック</b> で別のオブジェクトを選択します。 何もない領域を<b style="color:#fff">クリック</b>すると、選択が解除されます。</div>

</div>
<script>(function(){var els=document.querySelectorAll(".t");for(var i=0;i<els.length;i++){var e=els[i];var w=parseFloat(getComputedStyle(e).getPropertyValue("--w"));if(!w)continue;var old=e.style.transform;e.style.transform="none";var n=e.getBoundingClientRect().width;if(n>0){e.style.transform="scaleX("+(w/n)+")";}else{e.style.transform=old;}}})();</script></body></html>
